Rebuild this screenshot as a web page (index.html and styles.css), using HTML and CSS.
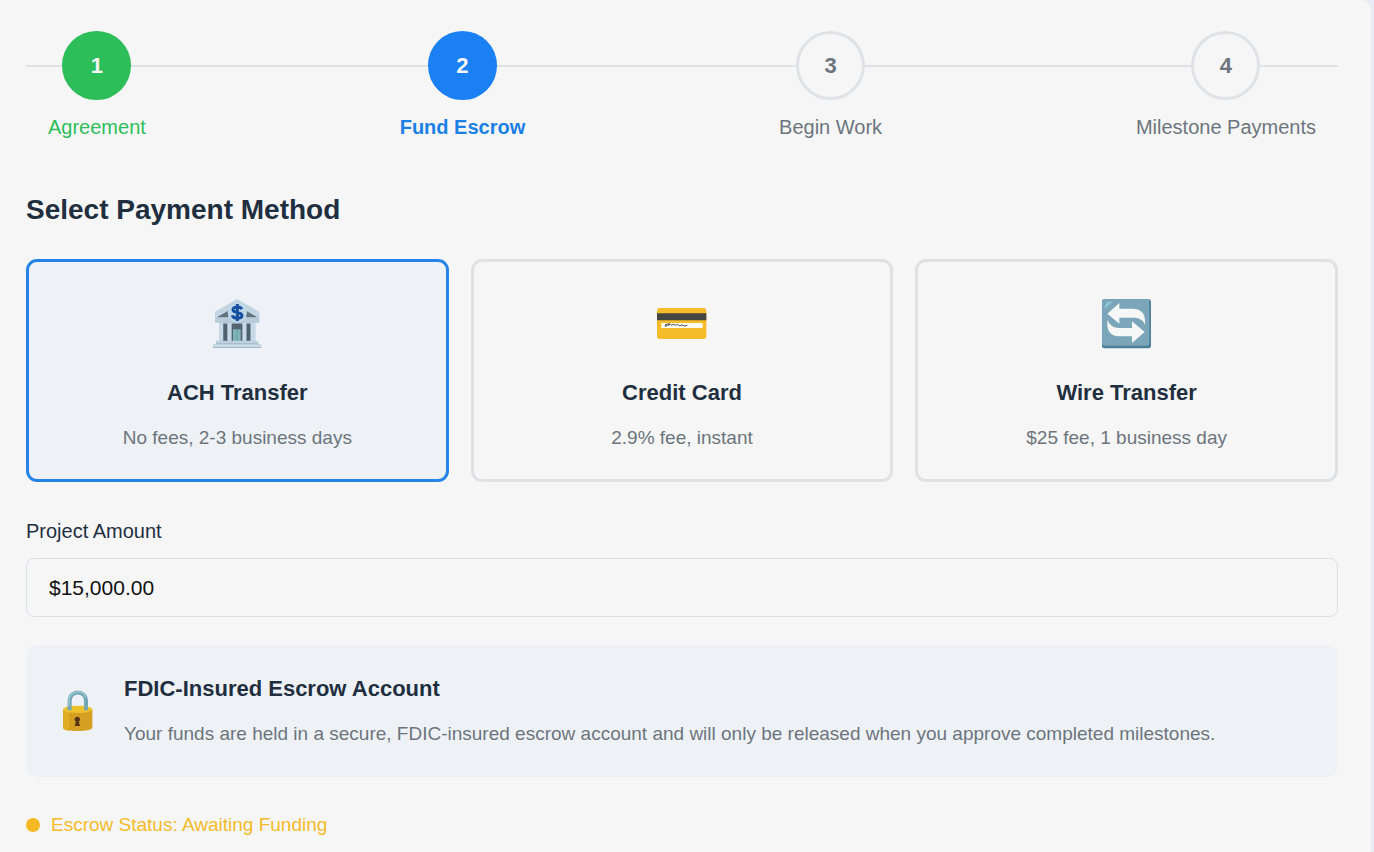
FILE: index.html
```html
<!DOCTYPE html>
<html lang="en">
<head>
<meta charset="utf-8">
<meta name="viewport" content="width=device-width, initial-scale=1">
<title>Fund Escrow</title>
<link rel="stylesheet" href="styles.css">
</head>
<body>
<main class="panel">
  <ol class="stepper">
    <li class="step step-done"><span class="step-circle">1</span><span class="step-label">Agreement</span></li>
    <li class="step step-active" aria-current="step"><span class="step-circle">2</span><span class="step-label">Fund Escrow</span></li>
    <li class="step"><span class="step-circle">3</span><span class="step-label">Begin Work</span></li>
    <li class="step"><span class="step-circle">4</span><span class="step-label">Milestone Payments</span></li>
  </ol>

  <h2 class="heading">Select Payment Method</h2>
  <div class="methods" role="radiogroup" aria-label="Payment method">
    <label class="method">
      <input class="method-input" type="radio" name="method" value="ach" checked>
      <svg class="method-icon" viewBox="42 39 156 156" aria-hidden="true">
        <path d="M120 42 187 80v22H54V80z" fill="#c3d5e2"/>
        <path d="M61 96 94 77v20H61zM180 96 147 77v20h33z" fill="#60727d"/>
        <path d="M54 99h133v14H54z" fill="#b7cbd9"/>
        <path d="M66 112h109v56H66z" fill="#a9c0d0"/>
        <path d="M79 116h12v52H79zM148 116h12v52h-12z" fill="#4e626e"/>
        <path d="M66 113h12v54H66zM92 113h12v54H92zM136 113h12v54h-12zM162 113h12v54h-12z" fill="#c8dae7"/>
        <path d="M104 116h32v52h-32z" fill="#526570"/>
        <path d="M108 133h23v35h-23z" fill="#80b4b9"/>
        <path d="M119 133h2v35h-2z" fill="#5e989f"/>
        <path d="M57 167h127v10H57z" fill="#bdd1df"/>
        <path d="M48 177h145v11H48z" fill="#c8d9e4"/>
        <path d="M57 175h127v3H57zM48 186h145v3H48z" fill="#a3b9c7"/>
        <circle cx="121" cy="83" r="29" fill="#bdd7e9"/>
        <path d="M134 73c-3-9-26-9-26 1 0 12 27 5 27 18 0 11-26 10-29-1M121 57v51" fill="none" stroke="#164f9f" stroke-width="9"/>
      </svg>
      <span class="method-title">ACH Transfer</span>
      <span class="method-text">No fees, 2-3 business days</span>
    </label>
    <label class="method">
      <input class="method-input" type="radio" name="method" value="card">
      <svg class="method-icon" viewBox="42 39 156 156" aria-hidden="true">
        <rect x="45" y="69" width="148" height="93" rx="9" fill="#f6bb29"/>
        <path d="M45 85h148v21H45z" fill="#444440"/>
        <path d="M58 114h124v15H58z" fill="#fffdf3"/>
        <path d="M69 124c3-10 7-9 5-2-2 5-5 1 0-3s9-4 8 0-5 4-3 0 8-2 9 2l7-3 5 3 6-3 6 4 9-2 7 3 8-2" fill="none" stroke="#4d4d49" stroke-width="3"/>
      </svg>
      <span class="method-title">Credit Card</span>
      <span class="method-text">2.9% fee, instant</span>
    </label>
    <label class="method">
      <input class="method-input" type="radio" name="method" value="wire">
      <svg class="method-icon" viewBox="42 39 156 156" aria-hidden="true">
        <rect x="45" y="43" width="147" height="147" rx="7" fill="#4d8098"/>
        <rect x="45" y="43" width="142" height="139" rx="7" fill="#7ba5b8"/>
        <path d="M54 66c1-13 8-17 20-16 6 2-15 11-20 24z" fill="#8bc6d6"/>
        <path d="M61 86 97 54v17h38c26 0 39 13 39 36v12c-7-15-17-21-34-21H97v18z" fill="#f6f8f8"/>
        <path d="M61 105c8 16 18 24 35 24h39v-20l38 32-38 33v-20H98c-27 0-37-15-37-37z" fill="#f6f8f8"/>
      </svg>
      <span class="method-title">Wire Transfer</span>
      <span class="method-text">$25 fee, 1 business day</span>
    </label>
  </div>

  <div class="field">
    <label class="field-label" for="amount">Project Amount</label>
    <input class="field-input" id="amount" type="text" value="$15,000.00">
  </div>

  <section class="notice">
    <svg class="notice-icon" viewBox="27 36 144 144" aria-hidden="true">
      <path d="M74 108V78c0-34 49-34 49 0v30" fill="none" stroke="#73a7b5" stroke-width="12"/>
      <path d="M72 103V76c2-29 42-34 50-9" fill="none" stroke="#9fcbd6" stroke-width="4"/>
      <path d="M54 103v55c2 13 86 13 88 0v-55z" fill="#d5a021"/>
      <path d="M54 103v55c1 5 9 8 18 9v-59z" fill="#e0ad25"/>
      <ellipse cx="98" cy="103" rx="44" ry="11" fill="#edc22c"/>
      <path d="M68 94h12v12H68zM117 94h12v12h-12z" fill="#73a7b5"/>
      <circle cx="97" cy="133" r="8" fill="#573618"/>
      <path d="M94 134h6l5 19H89z" fill="#573618"/>
    </svg>
    <div class="notice-body">
      <h3 class="notice-title">FDIC-Insured Escrow Account</h3>
      <p class="notice-text">Your funds are held in a secure, FDIC-insured escrow account and will only be released when you approve completed milestones.</p>
    </div>
  </section>

  <p class="status"><span class="status-dot"></span>Escrow Status: Awaiting Funding</p>
</main>
</body>
</html>
```
FILE: styles.css
```css
* {
  box-sizing: border-box;
}

body {
  margin: 0;
  padding-right: 3px;
  background: #e8edf5;
  color: #1f2f3f;
  font-family: "Liberation Sans", Arial, sans-serif;
}

h2, h3, p, ol {
  margin: 0;
  padding: 0;
}

.panel {
  min-height: 100vh;
  padding: 31px 33px 13px 26px;
  border-top-right-radius: 11px;
  background: #f6f6f6;
}

.stepper {
  position: relative;
  display: flex;
  justify-content: space-between;
  padding: 0 22px;
  list-style: none;
}

.stepper::before {
  content: "";
  position: absolute;
  top: 34px;
  left: 0;
  right: 0;
  height: 2px;
  background: #dee2e6;
}

.step {
  position: relative;
  display: flex;
  flex-direction: column;
  align-items: center;
  gap: 12px;
  color: #6c757d;
}

.step-circle {
  display: flex;
  align-items: center;
  justify-content: center;
  width: 69px;
  height: 69px;
  border: 3px solid #e0e2e8;
  border-radius: 50%;
  background: #f6f6f6;
  font-size: 22px;
  font-weight: bold;
}

.step-label {
  font-size: 20px;
  line-height: 30px;
}

.step-done {
  color: #2dbe5a;
}

.step-active {
  color: #1b80e4;
  font-weight: bold;
}

.step-done .step-circle {
  border-color: #2dbe5a;
  background: #2dbe5a;
  color: #f6f6f6;
}

.step-active .step-circle {
  border-color: #1b80f3;
  background: #1b80f3;
  color: #f6f6f6;
}

.heading {
  margin: 52px 0 33px;
  font-size: 28px;
  line-height: 32px;
}

.methods {
  display: grid;
  grid-template-columns: repeat(3, 1fr);
  gap: 22px;
}

.method {
  position: relative;
  display: flex;
  flex-direction: column;
  align-items: center;
  padding: 36px 20px 28px;
  border: 3px solid #dfe2e5;
  border-radius: 11px;
  text-align: center;
  cursor: pointer;
}

.method:has(:checked) {
  border-color: #2684e8;
  background: #eef2f7;
}

.method-input {
  position: absolute;
  inset: 0;
  margin: 0;
  opacity: 0;
}

.method-icon {
  width: 52px;
  height: 52px;
}

.method-title {
  margin: 29px 0 18px;
  font-size: 22px;
  font-weight: bold;
  line-height: 28px;
}

.method-text {
  color: #6c757d;
  font-size: 19px;
  line-height: 26px;
}

.field {
  display: flex;
  flex-direction: column;
  gap: 13px;
  margin: 35px 0 28px;
}

.field-label {
  font-size: 20px;
  line-height: 28px;
}

.field-input {
  width: 100%;
  height: 59px;
  padding: 0 22px;
  border: 1px solid #dcdfe6;
  border-radius: 8px;
  background: #f6f6f6;
  color: #111111;
  font-family: inherit;
  font-size: 21px;
}

.notice {
  display: flex;
  align-items: center;
  gap: 22px;
  padding: 30px 28px;
  border-radius: 11px;
  background: #eef2f7;
}

.notice-icon {
  flex: none;
  width: 48px;
  height: 48px;
}

.notice-title {
  margin-bottom: 18px;
  font-size: 22px;
  line-height: 28px;
}

.notice-text {
  color: #6c757d;
  font-size: 19px;
  line-height: 26px;
}

.status {
  display: flex;
  align-items: center;
  gap: 11px;
  margin-top: 35px;
  color: #f5bb2a;
  font-size: 19px;
  line-height: 26px;
}

.status-dot {
  width: 14px;
  height: 14px;
  border-radius: 50%;
  background: #f5b722;
}
```
